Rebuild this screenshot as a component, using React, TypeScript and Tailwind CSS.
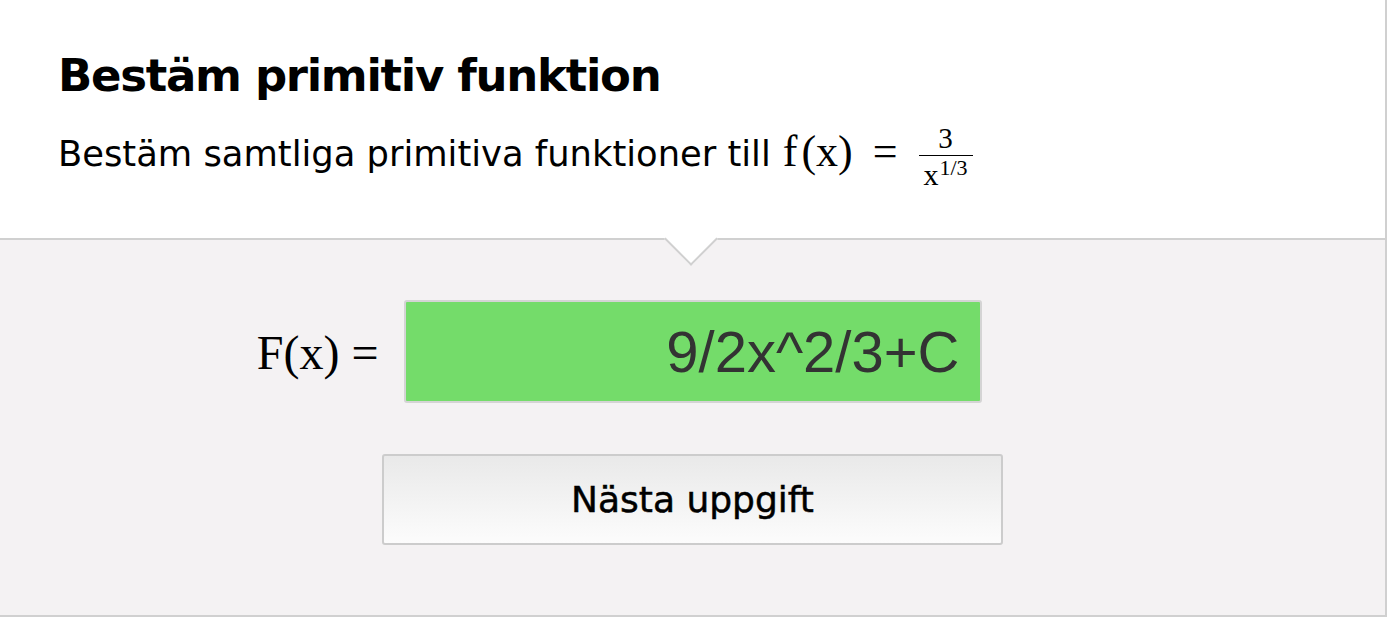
import React from "react";

const sans = "font-['DejaVu_Sans','Noto_Sans',sans-serif]";
const serif = "font-['Liberation_Serif','Times_New_Roman',serif]";

const Fraction: React.FC = () => (
    <span className={`${serif} ml-[21px] inline-flex -translate-y-[18px] flex-col items-center`}>
        <span className="text-[29px] leading-[28px]">3</span>
        <span className="mt-[3px] h-[1px] w-[54px] bg-black" />
        <span className="mt-[5px] text-[30px] leading-[28px]">
            x<span className="relative -top-[10px] ml-[1px] text-[22px]">1/3</span>
        </span>
    </span>
);

const App: React.FC = () => {
    return (
        <div className="w-[1387px] bg-white text-black">
            <div className="h-[238px] border-r-2 border-[#d0d0d0] px-[58px] pt-[46px]">
                <div className={`${sans} text-[45px] font-bold leading-[60px] tracking-[-1.3px]`}>
                    Bestäm primitiv funktion
                </div>
                <div className="mt-[26px] flex items-baseline">
                    <span className={`${sans} text-[35.3px] leading-[40px]`}>
                        Bestäm samtliga primitiva funktioner till
                    </span>
                    <span className={`${serif} ml-[12px] text-[44px] leading-[40px]`}>
                        f<span className="ml-[4px]">(x)</span>
                        <span className="ml-[20px]">=</span>
                    </span>
                    <Fraction />
                </div>
            </div>
            <div className="relative border-y-2 border-r-2 border-[#d0d0d0] bg-[#f4f2f3] pt-[60px] pb-[70px]">
                <div className="absolute left-[672px] -top-[20px] h-[38px] w-[38px] rotate-45 border-b-2 border-r-2 border-[#d0d0d0] bg-white" />
                <div className="grid grid-cols-[1fr_578px_1fr] items-center">
                    <div className={`${serif} justify-self-end pr-[25px] pt-[3px] text-[48px] leading-none`}>
                        F(x) =
                    </div>
                    <div className="flex h-[103px] items-center justify-end rounded-[3px] border-2 border-[#d4d4d4] bg-[#74dc6a] pr-[20px]">
                        <span className="font-['Liberation_Sans',Arial,sans-serif] text-[58px] leading-none text-[#333333]">
                            9/2x^2/3+C
                        </span>
                    </div>
                    <div />
                </div>
                <div className="mt-[51px] flex justify-center">
                    <button
                        className={`${sans} h-[91px] w-[621px] rounded-[3px] border-2 border-[#cccccc] bg-gradient-to-b from-[#e9e9e9] to-[#fcfcfc] text-[36px] text-black [-webkit-text-stroke:0.5px_black]`}
                    >
                        Nästa uppgift
                    </button>
                </div>
            </div>
        </div>
    );
};

export default App;
